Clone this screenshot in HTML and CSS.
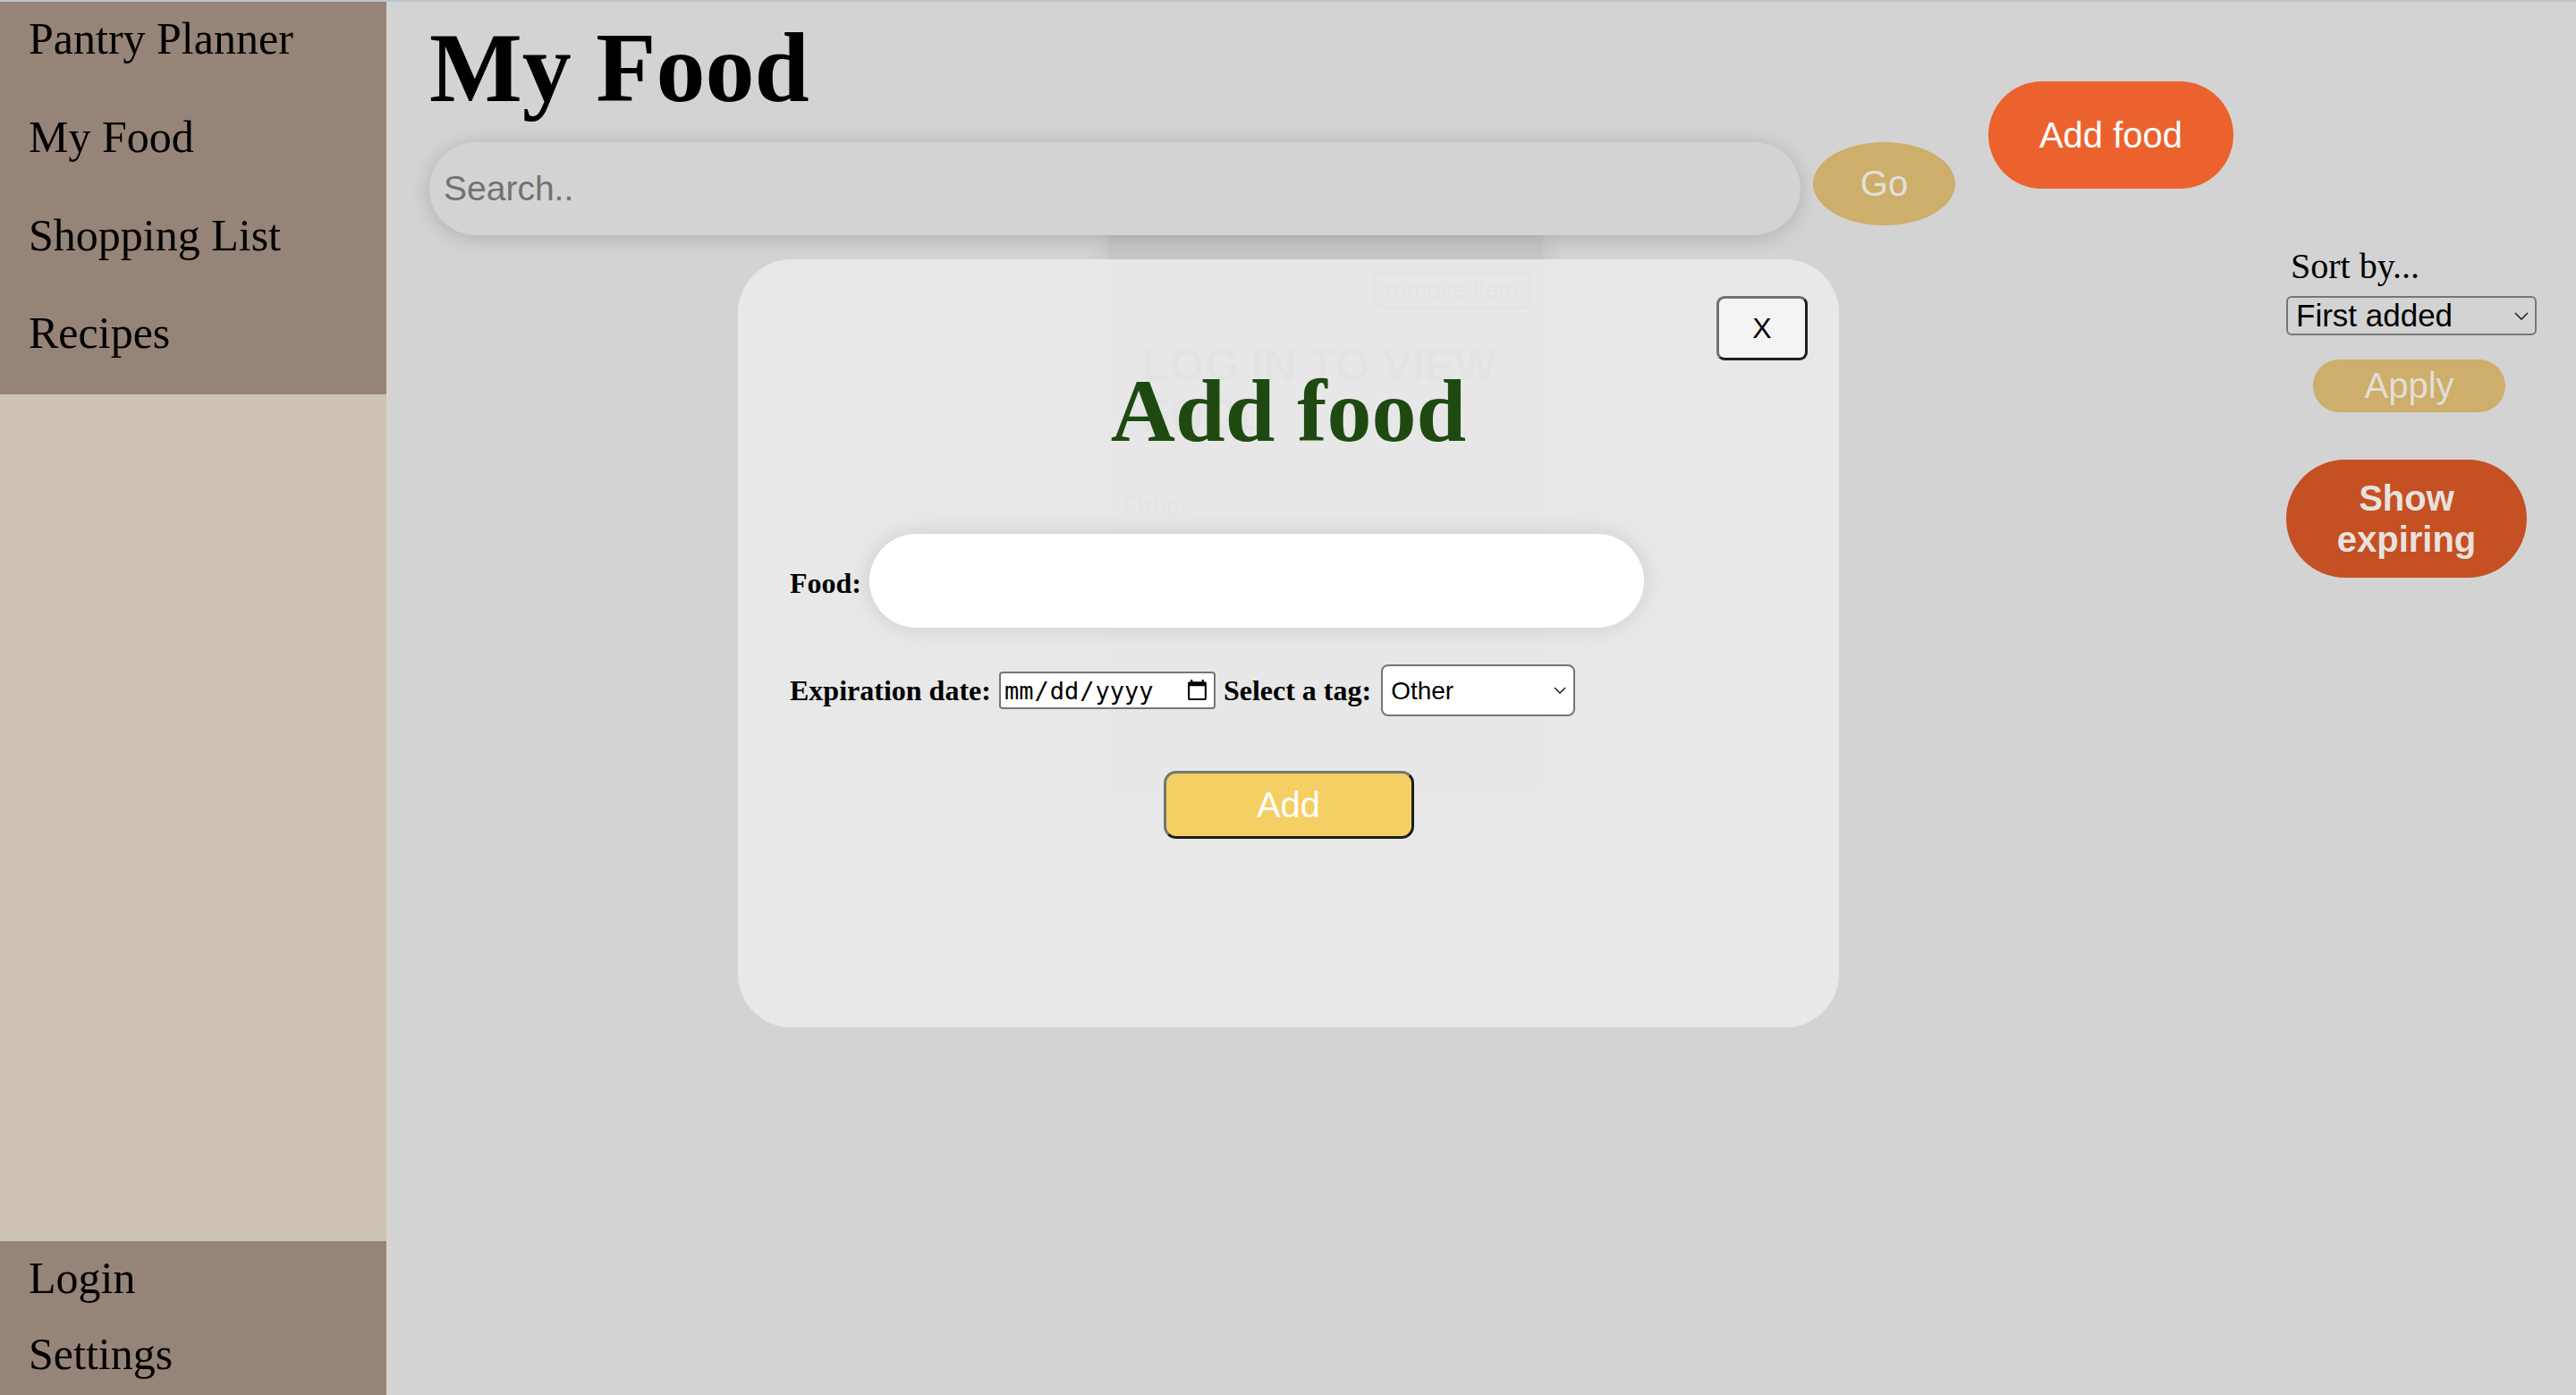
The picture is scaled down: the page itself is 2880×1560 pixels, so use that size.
FILE: index.html
```html
<!DOCTYPE html>
<html lang="en">
<head>
<meta charset="utf-8">
<title>Pantry Planner - My Food</title>
<link rel="stylesheet" href="styles.css">
</head>
<body>
<div class="app">
  <aside class="sidebar">
    <nav class="nav-top">
      <a class="nav-item">Pantry Planner</a>
      <a class="nav-item">My Food</a>
      <a class="nav-item">Shopping List</a>
      <a class="nav-item">Recipes</a>
    </nav>
    <div class="nav-spacer"></div>
    <nav class="nav-bottom">
      <a class="nav-item nav-item-small">Login</a>
      <a class="nav-item nav-item-small">Settings</a>
    </nav>
  </aside>

  <main class="main">
    <div class="content">
      <h1 class="page-title">My Food</h1>
      <div class="search-row">
        <input class="search-input" type="text" placeholder="Search..">
        <button class="go-btn">Go</button>
      </div>
      <div class="cards">
        <div class="food-card">
          <div class="card-top"><button class="remove-btn">remove item</button></div>
          <h2 class="card-title">LOG IN TO VIEW FOOD</h2>
          <p class="card-tag">Other</p>
        </div>
      </div>
    </div>

    <button class="add-food-btn">Add food</button>

    <div class="sort-panel">
      <label class="sort-label">Sort by...</label>
      <div class="select-wrap sort-select-wrap">
        <select class="sort-select">
          <option>First added</option>
        </select>
        <svg class="chevron" width="16" height="9" viewBox="0 0 16 9"><path d="M1 1 L8 8 L15 1" fill="none" stroke="#222" stroke-width="1.6"/></svg>
      </div>
      <button class="apply-btn">Apply</button>
      <button class="expiring-btn">Show expiring</button>
    </div>
  </main>
</div>

<div class="modal">
  <button class="close-btn">X</button>
  <h2 class="modal-title">Add food</h2>
  <div class="form-row food-row">
    <label class="form-label">Food:</label>
    <input class="food-input" type="text">
  </div>
  <div class="form-row detail-row">
    <label class="form-label">Expiration date:</label>
    <input class="date-input" type="date">
    <label class="form-label tag-label">Select a tag:</label>
    <div class="select-wrap tag-select-wrap">
      <select class="tag-select">
        <option>Other</option>
      </select>
      <svg class="chevron" width="14" height="8" viewBox="0 0 14 8"><path d="M1 1 L7 7 L13 1" fill="none" stroke="#222" stroke-width="1.5"/></svg>
    </div>
  </div>
  <button class="add-btn">Add</button>
</div>
</body>
</html>
```

FILE: styles.css
```css
* {
  box-sizing: border-box;
}

html, body {
  margin: 0;
  padding: 0;
  height: 100%;
}

body {
  background: #d3d3d3;
  border-top: 2px solid #b9c4cf;
  font-family: "Liberation Serif", "Times New Roman", serif;
  overflow: hidden;
  position: relative;
}

.app {
  display: flex;
  height: 100%;
}

/* Sidebar */
.sidebar {
  width: 432px;
  flex: 0 0 432px;
  display: flex;
  flex-direction: column;
  background: #cdc4b3;
}

.nav-top,
.nav-bottom {
  background: #968478;
  display: flex;
  flex-direction: column;
}

.nav-top {
  height: 439px;
}

.nav-spacer {
  flex: 1;
}

.nav-bottom {
  height: 172px;
}

.nav-item {
  display: block;
  height: 109.75px;
  padding: 13px 0 0 32px;
  font-size: 50px;
  line-height: 57.5px;
  color: #000;
  text-decoration: none;
  white-space: nowrap;
}

.nav-item-small {
  height: 85px;
}

/* Main */
.main {
  flex: 1;
  display: flex;
  align-items: flex-start;
  padding-left: 48px;
  min-width: 0;
}

.content {
  width: 1706px;
  flex: 0 0 1706px;
  display: flex;
  flex-direction: column;
}

.page-title {
  margin: 11px 0 0;
  font-size: 110px;
  line-height: 126px;
  font-weight: bold;
  color: #000;
}

.search-row {
  margin-top: 20px;
  display: flex;
  align-items: flex-start;
  gap: 14px;
  position: relative;
  z-index: 2;
}

.search-input {
  width: 1533px;
  height: 104px;
  border: none;
  border-radius: 52px;
  background: #d3d3d3;
  box-shadow: 0 3px 22px rgba(0, 0, 0, 0.17);
  padding: 0 16px;
  font-family: "Liberation Sans", Arial, sans-serif;
  font-size: 39px;
  color: #333;
  outline: none;
}

.search-input::placeholder {
  color: #727272;
}

.go-btn {
  width: 159px;
  height: 93px;
  border: none;
  border-radius: 80px / 47px;
  background: #cdae6a;
  color: #e2e0da;
  font-family: "Liberation Sans", Arial, sans-serif;
  font-size: 40px;
  padding: 0;
}

/* Card behind modal */
.cards {
  display: flex;
  padding-left: 760px;
}

.food-card {
  width: 485px;
  height: 626px;
  background: #c6c6c6;
  box-shadow: 0 0 22px 6px rgba(0, 0, 0, 0.06);
  position: relative;
  z-index: 1;
}

.card-top {
  display: flex;
  justify-content: flex-end;
  padding: 40px 13px 0 0;
}

.remove-btn {
  height: 42px;
  width: 177px;
  border: 3px solid #8f8f8f;
  border-radius: 8px;
  background: transparent;
  color: #8a8a8a;
  font-family: "Liberation Sans", Arial, sans-serif;
  font-size: 27px;
  padding: 0;
}

.card-title {
  margin: 36px 0 0 37px;
  width: 420px;
  font-family: "Liberation Sans", Arial, sans-serif;
  font-weight: bold;
  font-size: 50px;
  line-height: 56px;
  color: #8a8a8a;
}

.card-tag {
  margin: 54px 0 0 16px;
  font-size: 32px;
  color: #8f8f8f;
}

/* Add food button */
.add-food-btn {
  margin: 89px 0 0 37px;
  width: 274px;
  height: 120px;
  border: none;
  border-radius: 60px;
  background: #ec622e;
  color: #fff;
  font-family: "Liberation Sans", Arial, sans-serif;
  font-size: 40px;
  flex: 0 0 auto;
}

/* Sort panel */
.sort-panel {
  margin: 272.5px 44px 0 auto;
  width: 280px;
  flex: 0 0 280px;
  display: flex;
  flex-direction: column;
  align-items: flex-start;
}

.sort-label {
  padding-left: 5px;
  font-size: 40px;
  line-height: 46px;
  color: #000;
}

.select-wrap {
  position: relative;
}

.select-wrap select {
  -webkit-appearance: none;
  appearance: none;
  font-family: "Liberation Sans", Arial, sans-serif;
  color: #000;
  outline: none;
}

.chevron {
  position: absolute;
  top: 50%;
  pointer-events: none;
}

.sort-select-wrap {
  margin-top: 10.5px;
}

.sort-select {
  width: 280px;
  height: 44px;
  border: 2px solid #767676;
  border-radius: 6px;
  background: transparent;
  font-size: 35px;
  padding: 0 0 0 9px;
  line-height: 40px;
}

.sort-select-wrap .chevron {
  right: 9px;
  margin-top: -4px;
}

.apply-btn {
  margin: 27px 0 0 30px;
  width: 215px;
  height: 59px;
  border: none;
  border-radius: 30px;
  background: #cdae6a;
  color: #e2ded4;
  font-family: "Liberation Sans", Arial, sans-serif;
  font-size: 40px;
  padding: 0;
}

.expiring-btn {
  margin-top: 53px;
  width: 269px;
  height: 132px;
  border: none;
  border-radius: 66px;
  background: #c55024;
  color: #e8e2de;
  font-family: "Liberation Sans", Arial, sans-serif;
  font-weight: bold;
  font-size: 40px;
  line-height: 46px;
  padding: 0 30px;
}

/* Modal */
.modal {
  position: absolute;
  left: 825px;
  top: 288px;
  width: 1231px;
  height: 859px;
  border-radius: 60px;
  background: rgba(234, 234, 234, 0.93);
  padding: 0 58px;
  display: flex;
  flex-direction: column;
  z-index: 10;
}

.close-btn {
  position: absolute;
  top: 41px;
  right: 35px;
  width: 102px;
  height: 72px;
  border-style: solid;
  border-width: 3px;
  border-color: #707070 #1e1e1e #1e1e1e #707070;
  border-radius: 9px;
  background: #f4f4f4;
  font-family: "Liberation Sans", Arial, sans-serif;
  font-size: 32px;
  color: #000;
  padding: 0;
}

.modal-title {
  margin: 112px 0 0;
  text-align: center;
  font-size: 100px;
  line-height: 115px;
  font-weight: bold;
  color: #1e4a12;
}

.form-row {
  display: flex;
  align-items: center;
}

.form-label {
  font-size: 32px;
  line-height: 37px;
  font-weight: bold;
  color: #000;
  white-space: nowrap;
}

.food-row {
  margin-top: 80px;
}

.food-row .form-label {
  margin-top: 5px;
}

.food-input {
  margin-left: 9px;
  width: 866px;
  height: 105px;
  border: none;
  border-radius: 53px;
  background: #fff;
  box-shadow: 0 0 26px rgba(0, 0, 0, 0.12);
  outline: none;
  font-size: 32px;
  padding: 0 30px;
}

.detail-row {
  margin-top: 41px;
  height: 58px;
}

.date-input {
  margin-left: 9px;
  width: 242px;
  height: 42px;
  border: 2px solid #767676;
  border-radius: 4px;
  background: #fff;
  font-family: "DejaVu Sans Mono", "Liberation Mono", monospace;
  font-size: 27px;
  color: #000;
  padding: 0 3px;
  outline: none;
}

.tag-label {
  margin-left: 9px;
}

.tag-select-wrap {
  margin-left: 11px;
}

.tag-select {
  width: 217px;
  height: 58px;
  border: 2px solid #767676;
  border-radius: 8px;
  background: #fff;
  font-size: 28px;
  padding: 0 0 0 9px;
}

.tag-select-wrap .chevron {
  right: 10px;
  margin-top: -4px;
}

.add-btn {
  margin-top: 61px;
  align-self: center;
  width: 280px;
  height: 76px;
  border-style: solid;
  border-width: 3px;
  border-color: #767676 #1c1c1c #1c1c1c #767676;
  border-radius: 14px;
  background: #f4cf63;
  color: #fff;
  font-family: "Liberation Sans", Arial, sans-serif;
  font-size: 40px;
  padding: 0;
}
```
